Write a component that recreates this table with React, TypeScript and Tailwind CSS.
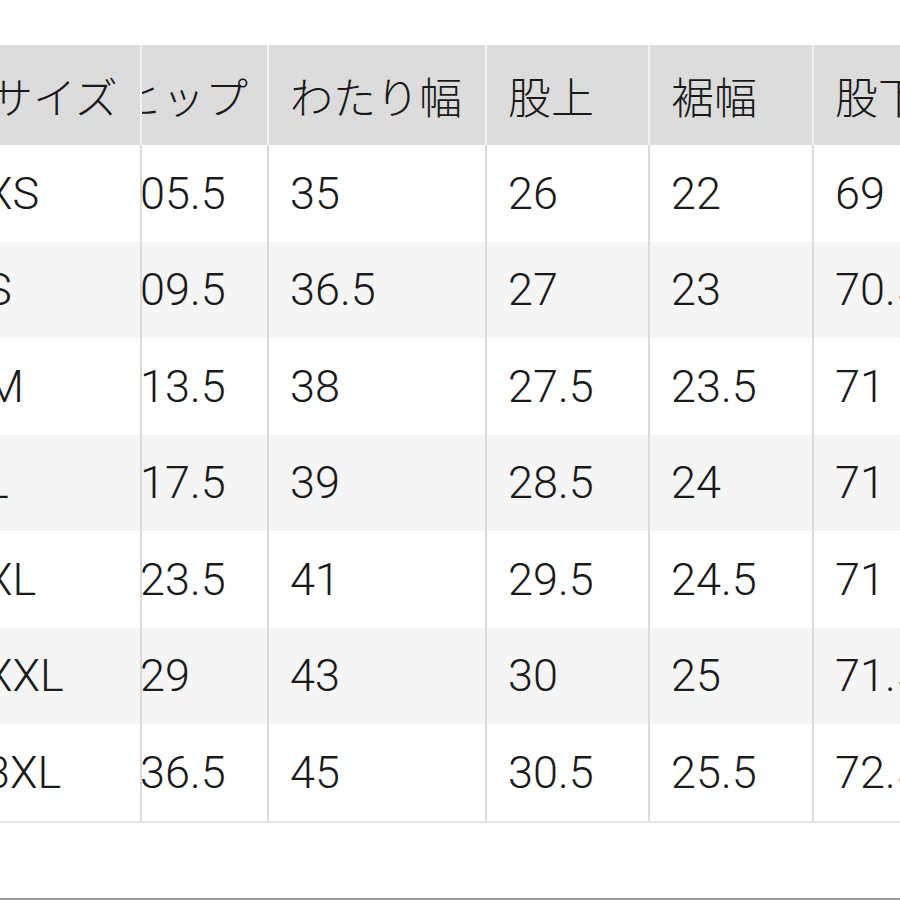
import React from "react"

type Col = {
    label: string
    width: string
    headOffset: string
    bodyOffset: string
}

const cols: Col[] = [
    { label: "サイズ", width: "w-[142px]", headOffset: "ml-[-10px]", bodyOffset: "ml-[-15px]" },
    { label: "ヒップ", width: "w-[127px]", headOffset: "ml-[-23px]", bodyOffset: "ml-[-27px]" },
    { label: "わたり幅", width: "w-[218px]", headOffset: "ml-[21px]", bodyOffset: "ml-[21px]" },
    { label: "股上", width: "w-[163px]", headOffset: "ml-[21px]", bodyOffset: "ml-[21px]" },
    { label: "裾幅", width: "w-[164px]", headOffset: "ml-[21px]", bodyOffset: "ml-[21px]" },
    { label: "股下", width: "w-[200px]", headOffset: "ml-[21px]", bodyOffset: "ml-[21px]" },
]

const rows: string[][] = [
    ["XS", "105.5", "35", "26", "22", "69"],
    ["S", "109.5", "36.5", "27", "23", "70.5"],
    ["M", "113.5", "38", "27.5", "23.5", "71"],
    ["L", "117.5", "39", "28.5", "24", "71"],
    ["XL", "123.5", "41", "29.5", "24.5", "71"],
    ["XXL", "129", "43", "30", "25", "71.5"],
    ["3XL", "136.5", "45", "30.5", "25.5", "72.5"],
]

export default function App() {
    return (
        <div className="w-[900px] h-[900px] bg-white overflow-hidden flex flex-col">
            <div className="pt-[45px] flex-1">
                {/* header */}
                <div className="flex h-[100px] bg-[#dcdcdc] w-[1014px]">
                    {cols.map((c, i) => (
                        <div
                            key={c.label}
                            className={`${c.width} shrink-0 h-full flex items-center overflow-hidden ${
                                i < cols.length - 1 ? "border-r-2 border-[#f3f3f3]" : ""
                            }`}
                        >
                            <span
                                className={`${c.headOffset} whitespace-nowrap text-[43px] font-light leading-none text-[#1a1a1a] [font-family:'Noto_Sans_CJK_JP',sans-serif]`}
                            >
                                {c.label}
                            </span>
                        </div>
                    ))}
                </div>

                {/* body */}
                <div className="border-b-2 border-[#e2e2e2] w-[1014px]">
                    {rows.map((r, ri) => (
                        <div
                            key={r[0]}
                            className={`flex h-[96.5px] ${ri % 2 === 1 ? "bg-[#f5f5f5]" : "bg-white"}`}
                        >
                            {r.map((v, ci) => (
                                <div
                                    key={ci}
                                    className={`${cols[ci].width} shrink-0 h-full flex items-center overflow-hidden ${
                                        ci < cols.length - 1 ? "border-r-2 border-[#dadada]" : ""
                                    }`}
                                >
                                    <span
                                        className={`${cols[ci].bodyOffset} whitespace-nowrap text-[45px] font-light leading-none text-[#1a1a1a] [font-family:Roboto,'Liberation_Sans',sans-serif]`}
                                    >
                                        {v}
                                    </span>
                                </div>
                            ))}
                        </div>
                    ))}
                </div>
            </div>
            <div className="h-[2px] bg-[#9c9c9c]" />
        </div>
    )
}
